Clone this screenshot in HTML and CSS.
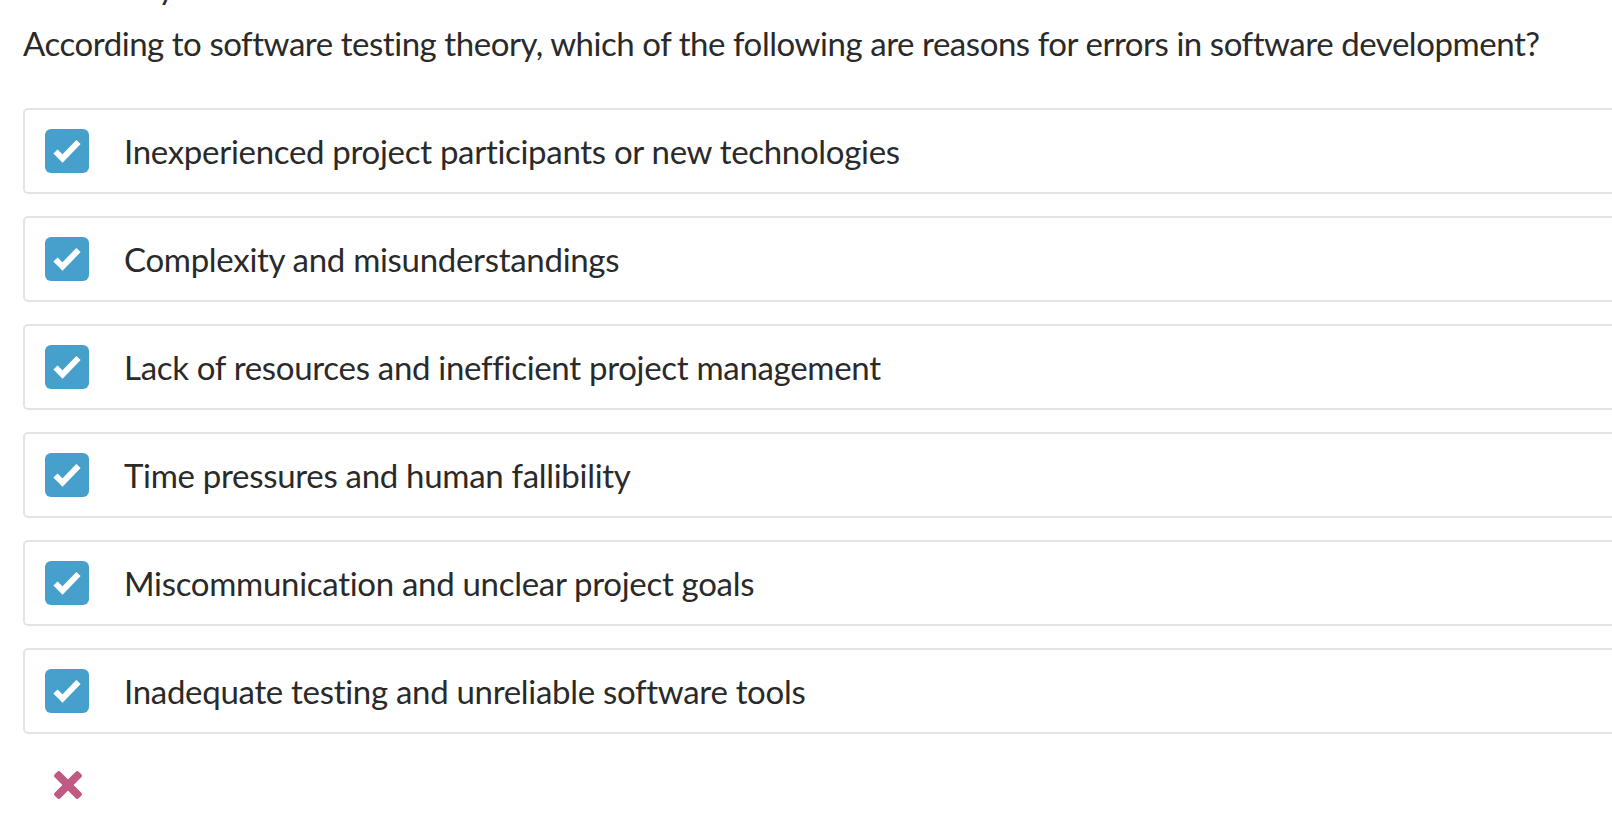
FILE: index.html
```html
<!DOCTYPE html>
<html lang="en">
<head>
<meta charset="utf-8">
<title>Question</title>
<link rel="stylesheet" href="styles.css">
</head>
<body>
<main class="quiz">
  <div class="prev-line"><span class="prev-glyph">y</span></div>
  <p class="question">According to software testing theory, which of the following are reasons for errors in software development?</p>
  <ul class="options">
    <li class="option">
      <span class="checkbox"><svg viewBox="0 0 44 44" width="44" height="44"><path d="M10.5 22.5 L17.5 29.5 L33.5 13" fill="none" stroke="#fff" stroke-width="6"/></svg></span>
      <span class="label">Inexperienced project participants or new technologies</span>
    </li>
    <li class="option">
      <span class="checkbox"><svg viewBox="0 0 44 44" width="44" height="44"><path d="M10.5 22.5 L17.5 29.5 L33.5 13" fill="none" stroke="#fff" stroke-width="6"/></svg></span>
      <span class="label">Complexity and misunderstandings</span>
    </li>
    <li class="option">
      <span class="checkbox"><svg viewBox="0 0 44 44" width="44" height="44"><path d="M10.5 22.5 L17.5 29.5 L33.5 13" fill="none" stroke="#fff" stroke-width="6"/></svg></span>
      <span class="label">Lack of resources and inefficient project management</span>
    </li>
    <li class="option">
      <span class="checkbox"><svg viewBox="0 0 44 44" width="44" height="44"><path d="M10.5 22.5 L17.5 29.5 L33.5 13" fill="none" stroke="#fff" stroke-width="6"/></svg></span>
      <span class="label">Time pressures and human fallibility</span>
    </li>
    <li class="option">
      <span class="checkbox"><svg viewBox="0 0 44 44" width="44" height="44"><path d="M10.5 22.5 L17.5 29.5 L33.5 13" fill="none" stroke="#fff" stroke-width="6"/></svg></span>
      <span class="label">Miscommunication and unclear project goals</span>
    </li>
    <li class="option">
      <span class="checkbox"><svg viewBox="0 0 44 44" width="44" height="44"><path d="M10.5 22.5 L17.5 29.5 L33.5 13" fill="none" stroke="#fff" stroke-width="6"/></svg></span>
      <span class="label">Inadequate testing and unreliable software tools</span>
    </li>
  </ul>
  <div class="result">
    <svg class="wrong" viewBox="0 0 28 28" width="28" height="28">
      <rect x="-3" y="10" width="34" height="8" rx="2.5" fill="#c05a82" transform="rotate(45 14 14)"/>
      <rect x="-3" y="10" width="34" height="8" rx="2.5" fill="#c05a82" transform="rotate(-45 14 14)"/>
    </svg>
  </div>
</main>
</body>
</html>
```

FILE: styles.css
```css
html, body {
  margin: 0;
  padding: 0;
  background: #ffffff;
  overflow: hidden;
}

body {
  font-family: "Lato", "Liberation Sans", sans-serif;
  color: #2a2a2a;
}

.quiz {
  padding-left: 23px;
  width: 1660px;
}

.prev-line {
  height: 38px;
  margin-top: -32px;
  font-size: 33px;
  line-height: 36px;
  padding-left: 135px;
}

.question {
  margin: 17px 0 0;
  font-size: 33px;
  line-height: 40px;
  letter-spacing: -0.45px;
}

.options {
  list-style: none;
  margin: 45px 0 0;
  padding: 0;
  display: flex;
  flex-direction: column;
  gap: 22px;
}

.option {
  display: flex;
  align-items: center;
  height: 82px;
  border: 2px solid #e4e4e4;
  border-radius: 5px;
  padding-left: 20px;
}

.checkbox {
  width: 44px;
  height: 44px;
  border-radius: 6px;
  background: #47a0cb;
  display: flex;
  flex-shrink: 0;
}

.label {
  margin-left: 35px;
  font-size: 33px;
  letter-spacing: -0.3px;
}

.result {
  padding: 37px 0 0 31px;
}

.wrong {
  display: block;
}
```
